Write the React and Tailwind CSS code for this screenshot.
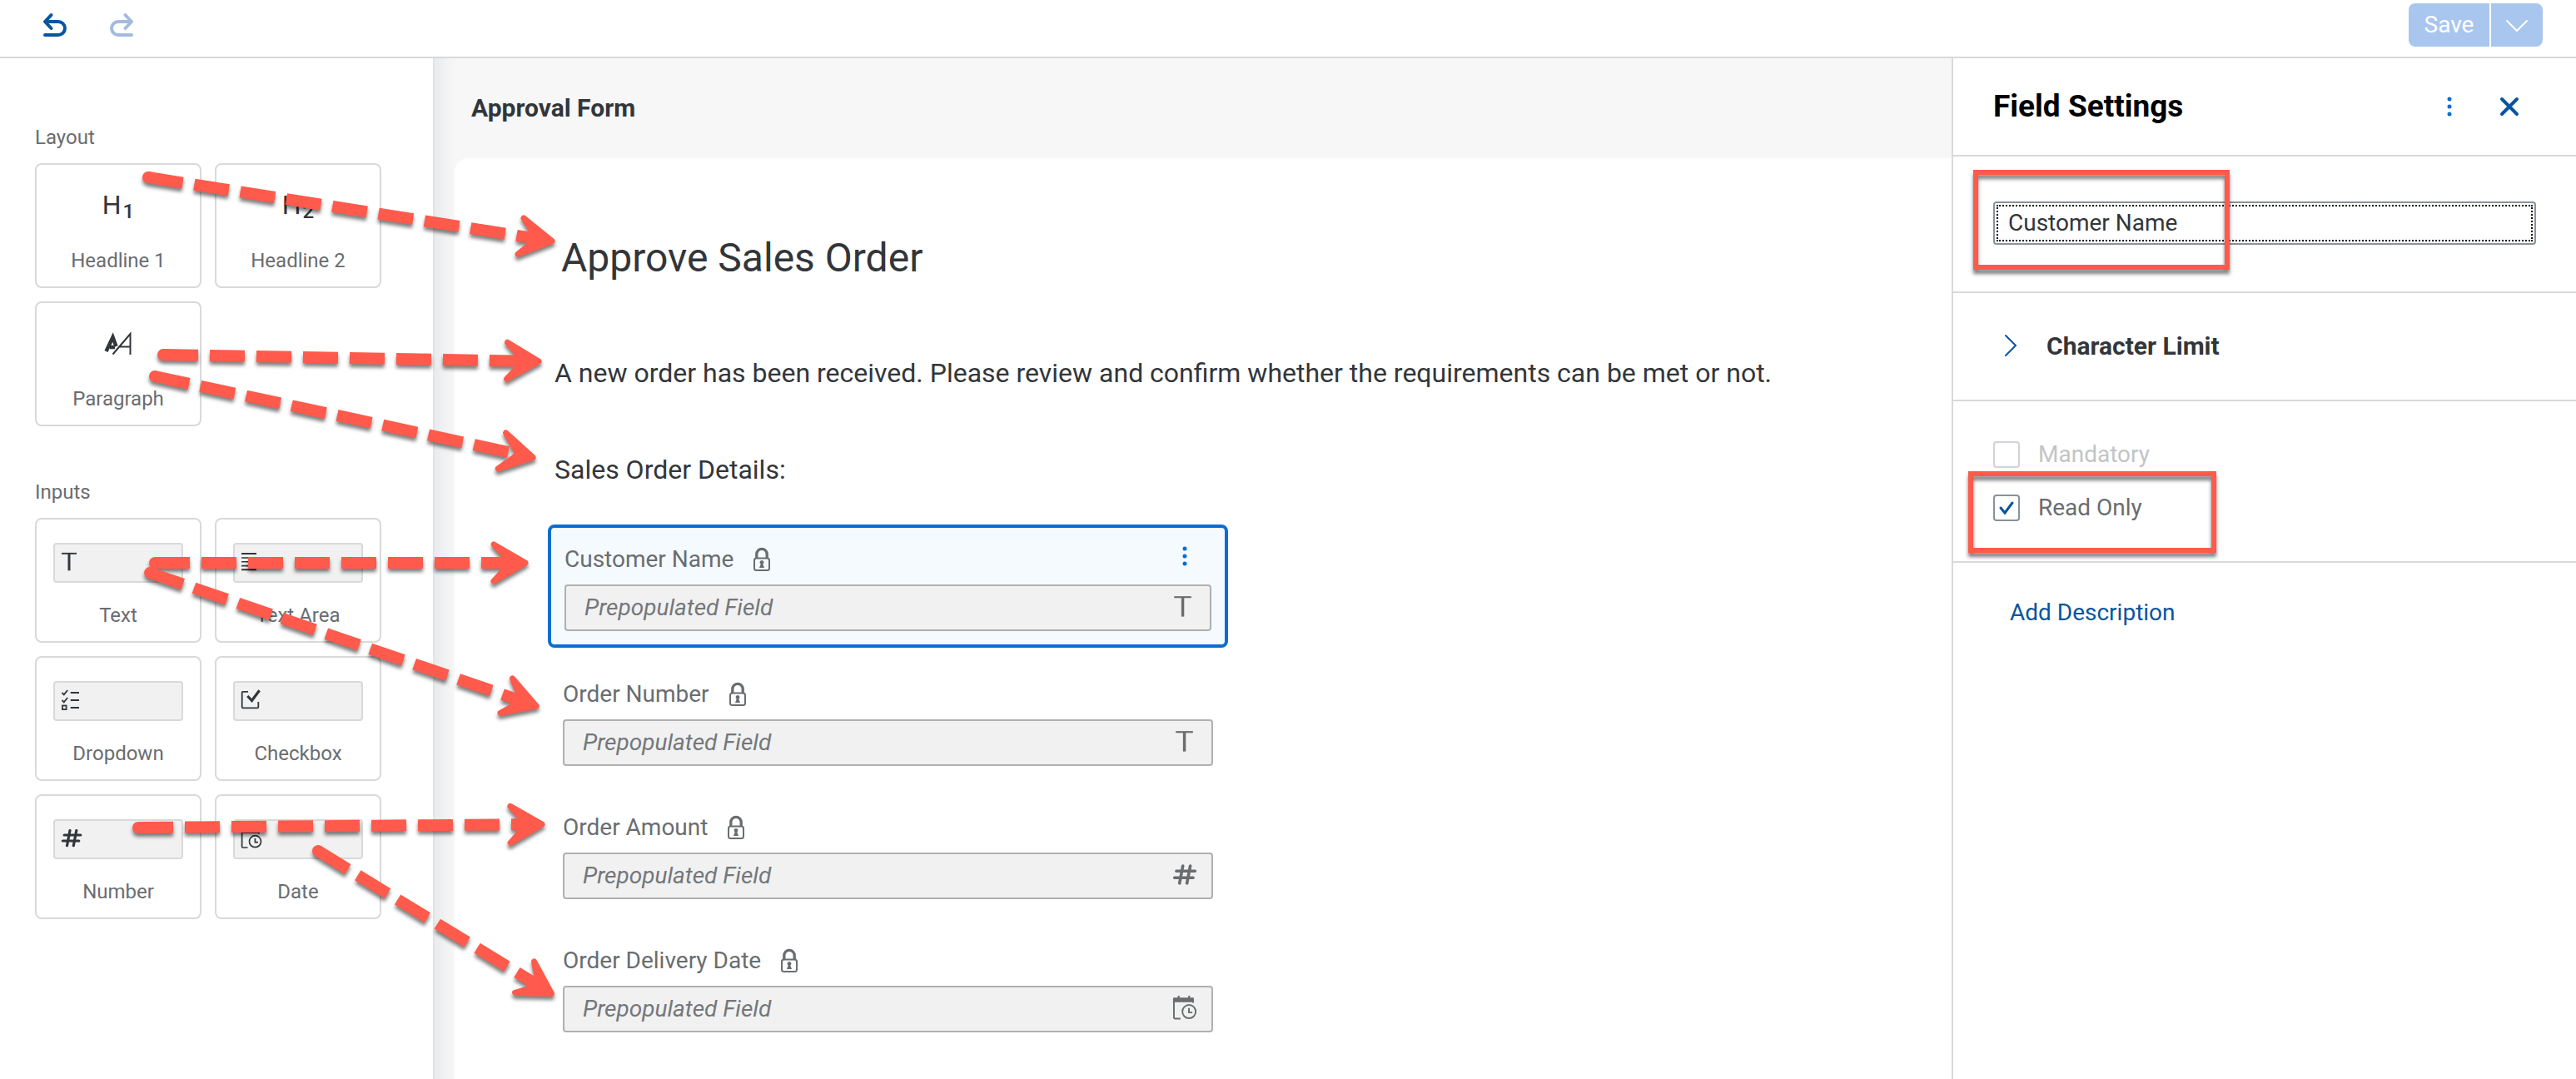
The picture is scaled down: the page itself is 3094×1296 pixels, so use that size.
function UndoIcon({ className }) {
  return (
    <svg viewBox="0 0 32 32" className={className} fill="none" stroke="currentColor" strokeWidth="4" strokeLinecap="round" strokeLinejoin="round" aria-hidden="true">
      <path d="M11.500 4 4 12 11.500 20" />
      <path d="M5 12H20a8 8 0 0 1 0 16H4" />
    </svg>
  );
}

function DotsIcon() {
  return (
    <svg viewBox="0 0 32 32" className="size-8" fill="currentColor" aria-hidden="true">
      <circle cx="16" cy="7" r="2.500" />
      <circle cx="16" cy="16" r="2.500" />
      <circle cx="16" cy="25" r="2.500" />
    </svg>
  );
}

function LockIcon() {
  return (
    <svg viewBox="0 0 24 32" className="h-8 w-6" fill="none" stroke="currentColor" aria-hidden="true">
      <path d="M5.800 15V9.500a6.200 6.200 0 0 1 12.400 0V15" strokeWidth="3.300" />
      <rect x="3" y="14.500" width="18" height="14.500" rx="2.500" strokeWidth="2" />
      <path d="M12 17a2.500 2.500 0 0 1 1.300 4.600l1.700 4.400H9l1.700-4.400A2.500 2.500 0 0 1 12 17Z" fill="currentColor" stroke="none" />
    </svg>
  );
}

function TextIcon({ className }) {
  return (
    <svg viewBox="0 0 22 28" className={className} fill="none" stroke="currentColor" aria-hidden="true">
      <path d="M2 2.800H20" strokeWidth="1.900" />
      <path d="M11 3V23.300" strokeWidth="3" />
    </svg>
  );
}

function TextAreaIcon({ className }) {
  return (
    <svg viewBox="0 0 22 28" className={className} fill="none" stroke="currentColor" strokeWidth="1.600" aria-hidden="true">
      <path d="M2 3H20M2 22.300H20" strokeWidth="2" />
      <path d="M2 8H20M2 12.800H20M2 17.600H20" />
    </svg>
  );
}

function ListIcon({ className }) {
  return (
    <svg viewBox="0 0 26 28" className={className} fill="none" stroke="currentColor" strokeWidth="1.800" aria-hidden="true">
      <path d="M2.500 4 4.800 6.300 9.200 1M2.500 13 4.800 15.300 9.200 10M12.700 4H23M12.700 13H23M12.700 22H23" />
      <rect x="3" y="19.500" width="4.600" height="4.600" />
    </svg>
  );
}

function CheckIcon({ className }) {
  return (
    <svg viewBox="0 0 26 28" className={className} fill="none" stroke="currentColor" strokeWidth="1.800" aria-hidden="true">
      <path d="M10 2.800H3.700a1 1 0 0 0-1 1V21.300a1 1 0 0 0 1 1H21.300a1 1 0 0 0 1-1V15" />
      <path d="M9.300 8 14.500 13.500 23.600 1.300" strokeWidth="3.200" />
    </svg>
  );
}

function HashIcon({ className }) {
  return (
    <svg viewBox="0 0 28 28" className={className} fill="none" stroke="currentColor" strokeWidth="3.200" strokeLinecap="round" aria-hidden="true">
      <path d="M12 3.500 8.500 21.700M19.800 3.500 16.300 21.700M5.200 9H24.800M3.300 16H22.800" />
    </svg>
  );
}

function DateIcon({ className }) {
  return (
    <svg viewBox="0 0 28 28" className={className} fill="none" stroke="currentColor" strokeWidth="1.700" aria-hidden="true">
      <path d="M2.600 5V23a1 1 0 0 0 1 1H9.500M22.800 5V7.500" />
      <path d="M1.700 3a1 1 0 0 1 1-1H22.600a1 1 0 0 1 1 1V6.700H1.700Z" fill="currentColor" stroke="none" />
      <path d="M7.600 0V3M18.600 0V3" strokeWidth="2" />
      <circle cx="18.500" cy="16.700" r="7" />
      <path d="M18.400 13V17.600H22" />
    </svg>
  );
}

function ParagraphIcon() {
  return (
    <svg viewBox="0 0 36 32" className="h-8 w-9" fill="none" stroke="currentColor" aria-hidden="true">
      <path d="M3.500 26 11.500 9 15.500 20M8 21H14" strokeWidth="4.500" />
      <path d="M11.500 29.500 32.500 5V30M20 20.500H32" strokeWidth="2" />
    </svg>
  );
}

function HeadlineIcon({ level }) {
  return (
    <span className="flex h-8 items-start gap-0.5 text-[32px] leading-8">
      H<span className="mt-2 text-2xl leading-8 font-medium">{level}</span>
    </span>
  );
}

function Tile({ label, children }) {
  return (
    <button type="button" className="flex h-[150px] flex-col items-center rounded-lg border-2 border-[#d9d9d9] bg-white text-2xl text-[#32363a]">
      {children}
      <span className="mt-[23px] leading-8 text-[#6a6d70]">{label}</span>
    </button>
  );
}

function LayoutTile({ label, children }) {
  return (
    <Tile label={label}>
      <span className="mt-8 mb-3 flex h-8 items-center">{children}</span>
    </Tile>
  );
}

function InputTile({ label, Icon }) {
  return (
    <Tile label={label}>
      <span className="mt-7 flex h-12 w-[156px] items-center rounded-sm border-2 border-[#d9d9d9] bg-[#f1f1f1] px-1.5">
        <Icon className="h-7" />
      </span>
    </Tile>
  );
}

function Field({ id, label, Icon, selected }) {
  return (
    <div className={selected ? "rounded-lg border-4 border-[#0a6ed1] bg-[#f5faff] p-4 pt-[18px]" : "mx-[18px] mt-9 pb-[18px]"}>
      <div className="flex h-10 items-center">
        <label htmlFor={id} className="leading-10 text-[#6a6d70]">{label}</label>
        <span className="ml-[22px] text-[#6a6d70]"><LockIcon /></span>
        {selected && (
          <button type="button" aria-label="Field actions" className="mr-4 ml-auto self-start text-[#0a6ed1]"><DotsIcon /></button>
        )}
      </div>
      <div className="mt-2.5 flex h-14 items-center rounded-sm border-2 border-[#b0b0b0] bg-[#f1f1f1] pr-4 pl-[22px] text-[#6a6d70]">
        <input id={id} readOnly placeholder="Prepopulated Field" className="min-w-0 flex-1 bg-transparent italic outline-none placeholder:text-[#74777a] placeholder:opacity-100" />
        <span className="flex w-8 justify-center"><Icon className="h-8" /></span>
      </div>
    </div>
  );
}

const ARROWS = [
  [178, 213, 666, 290],
  [196, 426, 650, 434],
  [186, 452, 643, 550],
  [186, 676, 634, 676],
  [180, 688, 647, 849],
  [166, 994, 654, 990],
  [382, 1022, 665, 1195],
];

function Arrows() {
  return (
    <svg width="700" height="1296" viewBox="0 0 700 1296" className="pointer-events-none absolute top-0 left-0 drop-shadow-[0_4px_2px_rgba(0,0,0,0.5)]" aria-hidden="true">
      {ARROWS.map(([x1, y1, x2, y2]) => {
        const length = Math.hypot(x2 - x1, y2 - y1);
        const angle = (Math.atan2(y2 - y1, x2 - x1) * 180) / Math.PI;
        return (
          <g key={`${x1}-${y1}`} transform={`translate(${x1} ${y1}) rotate(${angle})`} fill="#ff5a4b" stroke="#ff5a4b">
            <circle r="7" stroke="none" />
            <path d={`M0 0H${length - 20}`} strokeWidth="14" strokeDasharray="42 14" />
            <path d="M-3 0-41-22-21 0-41 22Z" transform={`translate(${length} 0)`} strokeWidth="7" strokeLinejoin="round" />
          </g>
        );
      })}
    </svg>
  );
}

export default function App() {
  return (
    <div className="relative flex min-h-screen flex-col bg-white font-[Roboto,sans-serif] text-[28px] text-[#32363a]">
      <header className="flex h-[70px] items-start justify-between border-b-2 border-[#d9d9d9] pr-10 pl-[50px]">
        <div className="flex gap-12 pt-3.5">
          <button type="button" aria-label="Undo" className="text-[#0854a0]"><UndoIcon className="size-8" /></button>
          <button type="button" aria-label="Redo" disabled className="text-[#a3bbdc]"><UndoIcon className="size-8 -scale-x-100" /></button>
        </div>
        <div className="mt-1 flex h-[52px] gap-0.5 text-white">
          <button type="button" disabled className="w-[97px] rounded-l-lg bg-[#a9c6ee]">Save</button>
          <button type="button" disabled aria-label="More save options" className="flex w-[62px] items-center justify-center rounded-r-lg bg-[#a9c6ee]">
            <svg viewBox="0 0 32 32" className="size-8" fill="none" stroke="currentColor" strokeWidth="2" strokeLinecap="round" aria-hidden="true"><path d="M4 11 16 23 28 11" /></svg>
          </button>
        </div>
      </header>

      <div className="flex flex-1">
        <aside className="w-[522px] shrink-0 border-r-2 border-[#e4e4e4] px-[42px] pt-[79px]">
          <h2 className="text-2xl leading-8 text-[#6a6d70]">Layout</h2>
          <div className="mt-[15px] grid w-[416px] grid-cols-2 gap-4">
            <LayoutTile label="Headline 1"><HeadlineIcon level="1" /></LayoutTile>
            <LayoutTile label="Headline 2"><HeadlineIcon level="2" /></LayoutTile>
            <LayoutTile label="Paragraph"><ParagraphIcon /></LayoutTile>
          </div>
          <h2 className="mt-[63px] text-2xl leading-8 text-[#6a6d70]">Inputs</h2>
          <div className="mt-[15px] grid w-[416px] grid-cols-2 gap-4">
            <InputTile label="Text" Icon={TextIcon} />
            <InputTile label="Text Area" Icon={TextAreaIcon} />
            <InputTile label="Dropdown" Icon={ListIcon} />
            <InputTile label="Checkbox" Icon={CheckIcon} />
            <InputTile label="Number" Icon={HashIcon} />
            <InputTile label="Date" Icon={DateIcon} />
          </div>
        </aside>

        <main className="flex min-w-0 flex-1 flex-col bg-[#f7f7f7] bg-linear-to-r from-[#e9ebed] to-[#f7f7f7] to-[24px] pl-6">
          <h1 className="flex h-[120px] items-center pb-0.5 pl-5 text-[30px] font-bold">Approval Form</h1>
          <form className="flex-1 rounded-tl-2xl bg-white pl-[112px]">
            <h2 className="pt-[88px] pl-4 text-[48px] leading-16">Approve Sales Order</h2>
            <p className="mt-[82px] pl-2 text-[32px] leading-12">A new order has been received. Please review and confirm whether the requirements can be met or not.</p>
            <p className="mt-[68px] pl-2 text-[32px] leading-12">Sales Order Details:</p>
            <div className="mt-[42px] w-[817px]">
              <Field id="customer" label="Customer Name" Icon={TextIcon} selected />
              <Field id="number" label="Order Number" Icon={TextIcon} />
              <Field id="amount" label="Order Amount" Icon={HashIcon} />
              <Field id="delivery" label="Order Delivery Date" Icon={DateIcon} />
            </div>
          </form>
        </main>

        <aside className="w-[750px] shrink-0 border-l-2 border-[#d9d9d9] bg-white">
          <div className="flex h-[118px] items-center border-b-2 border-[#d9d9d9] pr-16 pl-12">
            <h2 className="flex-1 text-[37px] font-bold text-black">Field Settings</h2>
            <button type="button" aria-label="More actions" className="mr-10 text-[#0a6ed1]"><DotsIcon /></button>
            <button type="button" aria-label="Close" className="text-[#0854a0]">
              <svg viewBox="0 0 32 32" className="size-8" fill="none" stroke="currentColor" strokeWidth="4" strokeLinecap="round" aria-hidden="true"><path d="M7 7 25 25M25 7 7 25" /></svg>
            </button>
          </div>
          <div className="relative h-[164px] border-b-2 border-[#d9d9d9] pt-[54px] pr-12 pl-12">
            <div className="h-[52px] rounded-sm border-2 border-[#89919a] p-0.5">
              <input aria-label="Field name" defaultValue="Customer Name" className="h-full w-full border-2 border-dotted border-black px-3 pb-0.5 outline-none" />
            </div>
            <div className="pointer-events-none absolute top-4 left-6 h-[120px] w-[308px] border-6 border-[#ff5a4b] drop-shadow-[0_5px_2px_rgba(0,0,0,0.5)]" />
          </div>
          <button type="button" aria-expanded="false" className="flex h-[130px] w-full items-center gap-7 border-b-2 border-[#d9d9d9] pb-0.5 pl-[52px] text-[30px] font-bold">
            <svg viewBox="0 0 32 32" className="size-8 text-[#0854a0]" fill="none" stroke="currentColor" strokeWidth="2" strokeLinecap="round" aria-hidden="true"><path d="M11 4 23 16 11 28" /></svg>
            Character Limit
          </button>
          <div className="relative flex h-[194px] flex-col gap-6 border-b-2 border-[#d9d9d9] pt-11 pl-12">
            <label className="flex h-10 items-center gap-[22px] text-[#c3c4c5]">
              <input type="checkbox" disabled className="size-8 appearance-none rounded-sm border-2 border-[#cfd2d6]" />
              Mandatory
            </label>
            <label className="flex h-10 items-center gap-[22px] text-[#6a6d70]">
              <span className="grid size-8">
                <input type="checkbox" defaultChecked className="col-start-1 row-start-1 size-8 appearance-none rounded-sm border-2 border-[#89919a]" />
                <svg viewBox="0 0 32 32" className="pointer-events-none col-start-1 row-start-1 size-8 text-[#0854a0]" fill="none" stroke="currentColor" strokeWidth="3" strokeLinecap="round" aria-hidden="true"><path d="M9 16 14 22 23 10" /></svg>
              </span>
              Read Only
            </label>
            <div className="pointer-events-none absolute top-[84px] left-[18px] h-[98px] w-[298px] border-6 border-[#ff5a4b] drop-shadow-[0_5px_2px_rgba(0,0,0,0.5)]" />
          </div>
          <button type="button" className="mt-10 ml-[68px] leading-10 text-[#0854a0]">Add Description</button>
        </aside>
      </div>
      <Arrows />
    </div>
  );
}
